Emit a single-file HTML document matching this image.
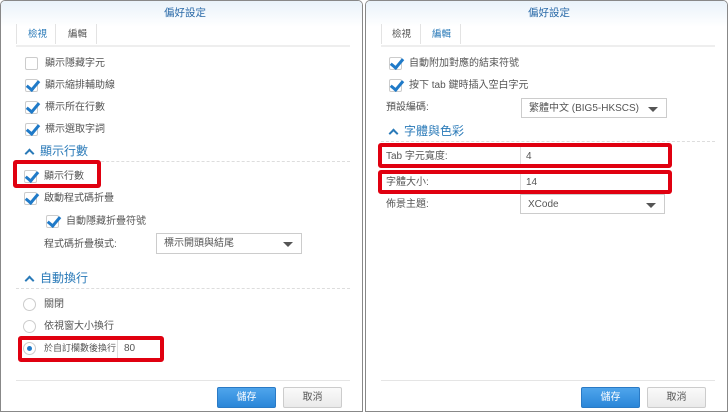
<!DOCTYPE html>
<html><head><meta charset="utf-8"><style>
*{box-sizing:border-box;margin:0;padding:0}
body{width:728px;height:412px;background:#fff;position:relative;overflow:hidden;font-family:"Liberation Sans","Noto Sans CJK TC",sans-serif;font-size:10px;color:#555}
.p{position:absolute;top:0;height:412px;background:#fff;border:1px solid #888;border-radius:5px 5px 0 0;overflow:hidden}
.hd{position:absolute;left:0;right:0;top:0;height:26px;background:linear-gradient(#e9f2fa,#fff);}
.a{position:absolute;white-space:nowrap;line-height:13px}
.title{color:#2a6aa8;font-size:10.5px}
.cb{position:absolute;width:13px;height:13px;border:1px solid #ccc;background:#fff;border-radius:2px}
.cb.on::after{content:"";position:absolute;left:3px;top:-2px;width:5px;height:10px;border:solid #1f7ac8;border-width:0 3px 3px 0;transform:rotate(40deg)}
.rd{position:absolute;width:13px;height:13px;border:1px solid #ccc;border-radius:50%;background:#fff}
.rd.on::after{content:"";position:absolute;left:3px;top:3px;width:5px;height:5px;border-radius:50%;background:#1f7ac8}
.sec{color:#2a7ab8;font-size:12px;line-height:16px}
.chev{position:absolute;width:7px;height:7px;border-left:2px solid #2a7ab8;border-top:2px solid #2a7ab8;transform:rotate(45deg)}
.dl{position:absolute;height:0;border-top:1px dashed #ddd}
.sel{position:absolute;border:1px solid #ccc;background:#fff;padding-left:7px;line-height:19px}
.sel::after{content:"";position:absolute;right:8px;top:8px;border:5px solid transparent;border-top:5px solid #555;border-bottom:0}
.red{position:absolute;border:4px solid #e00010;border-radius:3px}
.btn{position:absolute;width:59px;height:21px;border-radius:2px;text-align:center;line-height:19px}
.tabline{position:absolute;height:2px;background:#eee}
</style></head><body>

<div class="p" style="left:0;width:363px">
 <div class="hd"></div>
 <div class="a title" style="left:163px;top:6px">偏好設定</div>
 <div class="a" style="left:15px;top:23px;width:1px;height:20px;background:#e3e3e3"></div>
 <div class="a" style="left:54px;top:23px;width:1px;height:20px;background:#e3e3e3"></div>
 <div class="a" style="left:95px;top:23px;width:1px;height:20px;background:#e3e3e3"></div>
 <div class="a" style="left:27px;top:27px;color:#2a7ab8;font-size:9.5px">檢視</div>
 <div class="a" style="left:67px;top:27px;font-size:9.5px">編輯</div>
 <div class="tabline" style="left:15px;width:334px;top:44px"></div>
 <div class="cb" style="left:24px;top:56px"></div><div class="a" style="left:44px;top:56px">顯示隱藏字元</div>
 <div class="cb on" style="left:24px;top:78px"></div><div class="a" style="left:44px;top:78px">顯示縮排輔助線</div>
 <div class="cb on" style="left:24px;top:100px"></div><div class="a" style="left:44px;top:100px">標示所在行數</div>
 <div class="cb on" style="left:24px;top:122px"></div><div class="a" style="left:44px;top:122px">標示選取字詞</div>
 <div class="chev" style="left:25px;top:149px"></div><div class="a sec" style="left:39px;top:142px">顯示行數</div>
 <div class="dl" style="left:15px;width:334px;top:160px"></div>
 <div class="red" style="left:12px;top:159px;width:88px;height:28px"></div>
 <div class="cb on" style="left:23px;top:169px"></div><div class="a" style="left:43px;top:169px">顯示行數</div>
 <div class="cb on" style="left:23px;top:191px"></div><div class="a" style="left:43px;top:191px">啟動程式碼折疊</div>
 <div class="cb on" style="left:45px;top:214px"></div><div class="a" style="left:65px;top:214px">自動隱藏折疊符號</div>
 <div class="a" style="left:43px;top:237px">程式碼折疊模式:</div>
 <div class="sel" style="left:155px;top:232px;width:146px;height:21px">標示開頭與結尾</div>
 <div class="chev" style="left:25px;top:276px"></div><div class="a sec" style="left:39px;top:269px">自動換行</div>
 <div class="dl" style="left:15px;width:334px;top:287px"></div>
 <div class="rd" style="left:22px;top:297px"></div><div class="a" style="left:43px;top:297px">關閉</div>
 <div class="rd" style="left:22px;top:319px"></div><div class="a" style="left:43px;top:319px">依視窗大小換行</div>
 <div class="red" style="left:17px;top:335px;width:146px;height:26px"></div>
 <div class="rd on" style="left:22px;top:341px"></div><div class="a" style="left:43px;top:341px;font-size:9px">於自訂欄數後換行</div>
 <div class="a" style="left:116px;top:339px;width:40px;height:18px;border-left:1px solid #ddd;padding-left:6px;line-height:18px;background:#fff">80</div>
 <div class="tabline" style="left:15px;width:334px;top:379px;height:1px;background:#e5e5e5"></div>
 <div class="btn" style="left:216px;top:386px;background:linear-gradient(#4fa5ec,#2a86d8);color:#fff;border:1px solid #2a7ac5">儲存</div>
 <div class="btn" style="left:282px;top:386px;background:linear-gradient(#fafafa,#eaeaea);border:1px solid #ccc">取消</div>
</div>

<div class="p" style="left:365px;width:363px">
 <div class="hd"></div>
 <div class="a title" style="left:162px;top:6px">偏好設定</div>
 <div class="a" style="left:15px;top:23px;width:1px;height:20px;background:#e3e3e3"></div>
 <div class="a" style="left:54px;top:23px;width:1px;height:20px;background:#e3e3e3"></div>
 <div class="a" style="left:94px;top:23px;width:1px;height:20px;background:#e3e3e3"></div>
 <div class="a" style="left:26px;top:27px;font-size:9.5px">檢視</div>
 <div class="a" style="left:66px;top:27px;color:#2a7ab8;font-size:9.5px">編輯</div>
 <div class="tabline" style="left:15px;width:334px;top:44px"></div>
 <div class="cb on" style="left:23px;top:56px"></div><div class="a" style="left:43px;top:56px">自動附加對應的結束符號</div>
 <div class="cb on" style="left:23px;top:78px"></div><div class="a" style="left:43px;top:78px">按下 tab 鍵時插入空白字元</div>
 <div class="a" style="left:20px;top:100px">預設編碼:</div>
 <div class="sel" style="left:155px;top:97px;width:146px;height:20px">繁體中文 (BIG5-HKSCS)</div>
 <div class="chev" style="left:24px;top:129px"></div><div class="a sec" style="left:38px;top:122px">字體與色彩</div>
 <div class="dl" style="left:15px;width:334px;top:140px"></div>
 <div class="red" style="left:12px;top:142px;width:294px;height:25px"></div>
 <div class="a" style="left:20px;top:149px">Tab 字元寬度:</div>
 <div class="a" style="left:154px;top:146px;width:1px;height:17px;background:#ddd"></div>
 <div class="a" style="left:160px;top:149px">4</div>
 <div class="red" style="left:12px;top:169px;width:294px;height:24px"></div>
 <div class="a" style="left:20px;top:175px">字體大小:</div>
 <div class="a" style="left:154px;top:173px;width:1px;height:16px;background:#ddd"></div>
 <div class="a" style="left:160px;top:175px">14</div>
 <div class="a" style="left:20px;top:197px">佈景主題:</div>
 <div class="sel" style="left:154px;top:193px;width:145px;height:20px">XCode</div>
 <div class="tabline" style="left:15px;width:334px;top:379px;height:1px;background:#e5e5e5"></div>
 <div class="btn" style="left:215px;top:386px;background:linear-gradient(#4fa5ec,#2a86d8);color:#fff;border:1px solid #2a7ac5">儲存</div>
 <div class="btn" style="left:281px;top:386px;background:linear-gradient(#fafafa,#eaeaea);border:1px solid #ccc">取消</div>
</div>
</body></html>
